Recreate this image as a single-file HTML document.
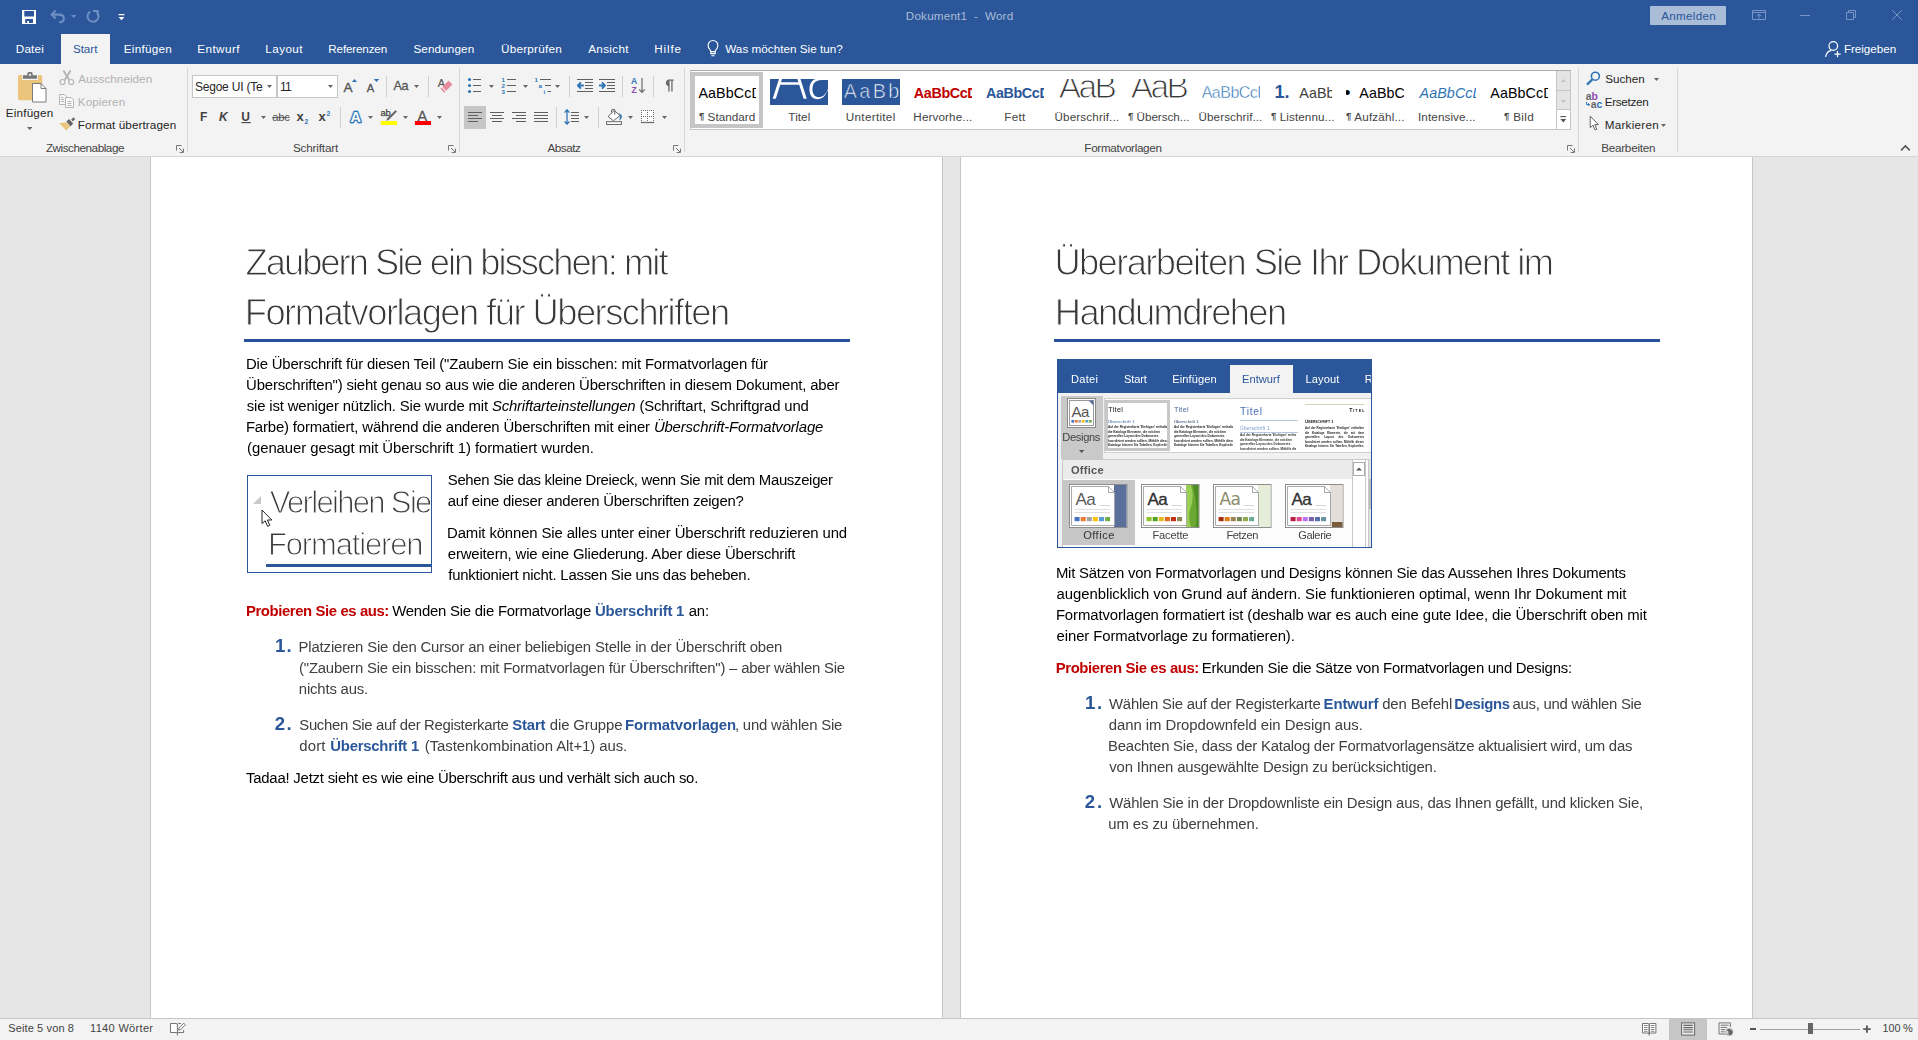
<!DOCTYPE html><html lang="de"><head><meta charset="utf-8"><title>Dokument1 - Word</title><style>

html,body{margin:0;padding:0;}
body{width:1918px;height:1040px;overflow:hidden;position:relative;background:#e6e6e6;font-family:"Liberation Sans", sans-serif;}
.t{position:absolute;white-space:pre;line-height:1;font-kerning:normal;}
.c{position:absolute;overflow:hidden;}
.doc{position:absolute;left:0;top:0;width:1918px;height:1040px;will-change:transform;}
b{font-weight:bold;}


</style></head><body>
<div style="position:absolute;left:0px;top:0px;width:1918px;height:64px;background:#2b579a;"></div>
<div style="position:absolute;left:0px;top:64px;width:1918px;height:92px;background:#f3f3f3;"></div>
<div style="position:absolute;left:0px;top:156px;width:1918px;height:1px;background:#d4d4d4;"></div>
<div style="position:absolute;left:61px;top:34px;width:49px;height:31px;background:#f3f3f3;"></div>
<div style="position:absolute;left:150px;top:157px;width:793px;height:862px;background:#fff;box-sizing:border-box;border-left:1px solid #c6c6c6;border-right:1px solid #c6c6c6;"></div>
<div style="position:absolute;left:960px;top:157px;width:793px;height:862px;background:#fff;box-sizing:border-box;border-left:1px solid #c6c6c6;border-right:1px solid #c6c6c6;"></div>
<div style="position:absolute;left:0px;top:1018px;width:1918px;height:1px;background:#c6c6c6;"></div>
<div style="position:absolute;left:0px;top:1019px;width:1918px;height:21px;background:#f3f3f3;"></div>
<div style="position:absolute;left:1650px;top:6px;width:76px;height:19px;background:#a9bcd8;border-radius:1px;"></div>
<div style="position:absolute;left:187px;top:68px;width:1px;height:84px;background:#d8d8d8;"></div>
<div style="position:absolute;left:459px;top:68px;width:1px;height:84px;background:#d8d8d8;"></div>
<div style="position:absolute;left:684px;top:68px;width:1px;height:84px;background:#d8d8d8;"></div>
<div style="position:absolute;left:1578px;top:68px;width:1px;height:84px;background:#d8d8d8;"></div>
<div style="position:absolute;left:1677px;top:68px;width:1px;height:84px;background:#d8d8d8;"></div>
<div style="position:absolute;left:386px;top:76px;width:1px;height:21px;background:#d0d0d0;"></div>
<div style="position:absolute;left:428px;top:76px;width:1px;height:21px;background:#d0d0d0;"></div>
<div style="position:absolute;left:340px;top:107px;width:1px;height:21px;background:#d0d0d0;"></div>
<div style="position:absolute;left:569px;top:76px;width:1px;height:21px;background:#d0d0d0;"></div>
<div style="position:absolute;left:622px;top:76px;width:1px;height:21px;background:#d0d0d0;"></div>
<div style="position:absolute;left:653px;top:76px;width:1px;height:21px;background:#d0d0d0;"></div>
<div style="position:absolute;left:556px;top:107px;width:1px;height:21px;background:#d0d0d0;"></div>
<div style="position:absolute;left:598px;top:107px;width:1px;height:21px;background:#d0d0d0;"></div>
<div style="position:absolute;left:192px;top:75px;width:85px;height:23px;background:#fff;box-sizing:border-box;border:1px solid #c6c6c6;"></div>
<div style="position:absolute;left:277px;top:75px;width:61px;height:23px;background:#fff;box-sizing:border-box;border:1px solid #c6c6c6;border-left:1px solid #c6c6c6;"></div>
<div style="position:absolute;left:244px;top:339px;width:606px;height:3px;background:#26539a;"></div>
<div style="position:absolute;left:1054px;top:339px;width:606px;height:3px;background:#26539a;"></div>
<svg style="position:absolute;left:22px;top:10px;" width="14" height="14" viewBox="0 0 14 14"><path fill="#fff" fill-rule="evenodd" d="M0 0H14V14H0Z M2.3 1H12V6.4H2.3Z M3.2 9H11V13H7V11H5.2V13H3.2Z"/></svg>
<svg style="position:absolute;left:50px;top:9px;" width="16" height="15" viewBox="0 0 16 15"><path d="M5.6 1.6L1.7 5.6L5.6 9.6M2 5.6H9.2C12.4 5.6 13.8 7.6 13.8 9.4C13.8 11.6 12 13.1 9.2 13.3" fill="none" stroke="#6f8ec4" stroke-width="2.1"/></svg>
<svg style="position:absolute;left:70.7px;top:15px;" width="5.4" height="3" viewBox="0 0 5.4 3"><path d="M0 0H5.4L2.7 3Z" fill="#6f8ec4"/></svg>
<svg style="position:absolute;left:85px;top:9px;" width="16" height="15" viewBox="0 0 16 15"><path d="M5.2 2.6A5.5 5.5 0 1 0 11.9 3.4" fill="none" stroke="#6f8ec4" stroke-width="2"/><path d="M8 1.9H12.7V6.6" fill="none" stroke="#6f8ec4" stroke-width="2"/></svg>
<svg style="position:absolute;left:118px;top:13px;" width="7" height="8" viewBox="0 0 7 8"><path d="M0.6 1H6.4V2.2H0.6Z M0.6 4H6.4L3.5 7.3Z" fill="#fff"/></svg>
<svg style="position:absolute;left:706.4px;top:39px;" width="14" height="18" viewBox="0 0 14 18"><path d="M4.8 12.6C4.8 10.6 2.1 9.6 2.1 6.4A4.9 4.9 0 0 1 11.9 6.4C11.9 9.6 9.2 10.6 9.2 12.6Z M4.8 12.6V14.6H9.2V12.6 M5.4 16.7H8.6" fill="none" stroke="#fff" stroke-width="1.15"/></svg>
<svg style="position:absolute;left:1824px;top:40px;" width="18" height="18" viewBox="0 0 18 18"><circle cx="9.3" cy="6" r="4.3" fill="none" stroke="#fff" stroke-width="1.2"/><path d="M1.6 17C2.2 13.2 4.6 11 7.4 10.4" fill="none" stroke="#fff" stroke-width="1.2"/><path d="M10.4 14.2H16.6M13.5 11.1V17.3" stroke="#fff" stroke-width="1.2"/></svg>
<svg style="position:absolute;left:1752px;top:10px;" width="14" height="10" viewBox="0 0 14 10"><path d="M0.5 0.5H13.5V9.5H0.5Z M0.5 2.5H13.5" fill="none" stroke="#7895c9"/><path d="M7 4.2V8.6 M4.8 6.2L7 4L9.2 6.2" fill="none" stroke="#7895c9"/></svg>
<div style="position:absolute;left:1800px;top:15px;width:10px;height:1px;background:#7895c9;"></div>
<svg style="position:absolute;left:1846px;top:10px;" width="10" height="10" viewBox="0 0 10 10"><path d="M0.5 2.5H7.5V9.5H0.5Z M2.5 2.5V0.5H9.5V7.5H7.5" fill="none" stroke="#7895c9"/></svg>
<svg style="position:absolute;left:1892px;top:10px;" width="10" height="10" viewBox="0 0 10 10"><path d="M0.3 0.3L9.7 9.7M9.7 0.3L0.3 9.7" fill="none" stroke="#7895c9" stroke-width="1"/></svg>
<svg style="position:absolute;left:18px;top:72px;" width="29" height="31" viewBox="0 0 29 31"><rect x="0" y="3" width="24.2" height="25.2" rx="1.6" fill="#ecc57c"/><rect x="4.2" y="2.6" width="15.8" height="5.4" fill="#f3f3f3"/><path d="M5 3.2H19V6.8H5Z M9.3 3.4V1.6Q9.3 0 10.9 0H13.1Q14.7 0 14.7 1.6V3.4Z" fill="#787878"/><circle cx="12" cy="2.9" r="1.1" fill="#f3f3f3"/><path d="M14.5 11.5H23L28 16.5V30H14.5Z" fill="#fff" stroke="#7a7a7a" stroke-width="1"/><path d="M23 11.5V16.5H28" fill="none" stroke="#7a7a7a" stroke-width="1"/></svg>
<svg style="position:absolute;left:27px;top:127px;" width="5.4" height="3" viewBox="0 0 5.4 3"><path d="M0 0H5.4L2.7 3Z" fill="#666"/></svg>
<svg style="position:absolute;left:59px;top:70px;" width="16" height="16" viewBox="0 0 16 16"><path d="M4.4 0.6L10.2 9.8 M11.6 0.6L5.8 9.8" stroke="#b4b4b4" stroke-width="1.9" fill="none"/><circle cx="3.5" cy="12" r="2.5" fill="none" stroke="#b4b4b4" stroke-width="1.2"/><circle cx="12.2" cy="12" r="2.5" fill="none" stroke="#b4b4b4" stroke-width="1.2"/></svg>
<svg style="position:absolute;left:59px;top:94px;" width="16" height="14" viewBox="0 0 16 14"><path d="M0.5 0.5H5.5L7.5 2.5V10.5H0.5Z" fill="#f8f8f8" stroke="#b4b4b4"/><path d="M2 3.5H4.5M2 5.5H5M2 7.5H5" stroke="#b4b4b4"/><path d="M6.5 3.5H12L14.5 6V13.5H6.5Z" fill="#fafafa" stroke="#b4b4b4"/><path d="M8.5 7.5H12.5M8.5 9.5H12.5M8.5 11.5H12.5" stroke="#b4b4b4"/></svg>
<svg style="position:absolute;left:59px;top:116px;" width="17" height="16" viewBox="0 0 17 16"><path d="M0.2 7.2L7.2 6.2L11 10.8L7.2 14.6Z" fill="#ecc57c"/><path d="M7.4 5.6L10 3L14.2 7.6L11.4 10.4Z" fill="#666"/><path d="M12.2 3.6L14.6 1.2L16.2 3L13.8 5.4Z" fill="#666"/></svg>
<svg style="position:absolute;left:175.5px;top:145px;" width="8" height="8" viewBox="0 0 8 8"><path d="M0.5 5.5V0.5H5.5" fill="none" stroke="#777"/><path d="M3 3L7 7M7.5 3.6V7.5H3.6" fill="none" stroke="#777"/></svg>
<svg style="position:absolute;left:447.5px;top:145px;" width="8" height="8" viewBox="0 0 8 8"><path d="M0.5 5.5V0.5H5.5" fill="none" stroke="#777"/><path d="M3 3L7 7M7.5 3.6V7.5H3.6" fill="none" stroke="#777"/></svg>
<svg style="position:absolute;left:672.5px;top:145px;" width="8" height="8" viewBox="0 0 8 8"><path d="M0.5 5.5V0.5H5.5" fill="none" stroke="#777"/><path d="M3 3L7 7M7.5 3.6V7.5H3.6" fill="none" stroke="#777"/></svg>
<svg style="position:absolute;left:1566.5px;top:145px;" width="8" height="8" viewBox="0 0 8 8"><path d="M0.5 5.5V0.5H5.5" fill="none" stroke="#777"/><path d="M3 3L7 7M7.5 3.6V7.5H3.6" fill="none" stroke="#777"/></svg>
<svg style="position:absolute;left:267px;top:85px;" width="5" height="3" viewBox="0 0 5 3"><path d="M0 0H5L2.5 3Z" fill="#666"/></svg>
<svg style="position:absolute;left:328px;top:85px;" width="5" height="3" viewBox="0 0 5 3"><path d="M0 0H5L2.5 3Z" fill="#666"/></svg>
<svg style="position:absolute;left:343px;top:78px;" width="16" height="15" viewBox="0 0 16 15"><text x="0.6" y="14" style="font-family:Liberation Sans,sans-serif;font-size:13.6px" fill="#555" stroke="#555" stroke-width="0.35">A</text><path d="M8.9 4L11.5 1L14.1 4Z" fill="#2e75b6"/></svg>
<svg style="position:absolute;left:366px;top:78px;" width="15" height="15" viewBox="0 0 15 15"><text x="0.8" y="14" style="font-family:Liberation Sans,sans-serif;font-size:11.2px" fill="#555" stroke="#555" stroke-width="0.35">A</text><path d="M7.7 1L13.3 1L10.5 4Z" fill="#2e75b6"/></svg>
<svg style="position:absolute;left:393px;top:79px;" width="18" height="13" viewBox="0 0 18 13"><text x="0.6" y="11.2" style="font-family:Liberation Sans,sans-serif;font-size:12.6px;letter-spacing:-0.4px" fill="#555" stroke="#555" stroke-width="0.3">Aa</text></svg>
<svg style="position:absolute;left:413.8px;top:85px;" width="5" height="3" viewBox="0 0 5 3"><path d="M0 0H5L2.5 3Z" fill="#666"/></svg>
<svg style="position:absolute;left:437px;top:78px;" width="17" height="16" viewBox="0 0 17 16"><text x="0.8" y="9" style="font-family:Liberation Sans,sans-serif;font-size:10.8px" fill="#555" stroke="#555" stroke-width="0.2">A</text><path d="M11.6 2.6L15.4 6.6L9.2 12.8L5.4 8.8Z" fill="#e88b9c"/><path d="M4.7 9.5L8.5 13.5L7.3 14.7L3.5 10.7Z" fill="#e88b9c"/></svg>
<svg style="position:absolute;left:199px;top:110px;" width="10" height="13" viewBox="0 0 10 13"><text x="1" y="11.2" style="font-family:Liberation Sans,sans-serif;font-weight:bold;font-size:12px" fill="#444">F</text></svg>
<svg style="position:absolute;left:218px;top:110px;" width="12" height="13" viewBox="0 0 12 13"><text x="1" y="11.2" style="font-family:Liberation Sans,sans-serif;font-weight:bold;font-size:12px;font-style:italic" fill="#444">K</text></svg>
<svg style="position:absolute;left:240px;top:110px;" width="12" height="14" viewBox="0 0 12 14"><text x="1.2" y="11.2" style="font-family:Liberation Sans,sans-serif;font-weight:bold;font-size:12px" fill="#444">U</text><path d="M1.4 12.6H10.8" stroke="#444" stroke-width="1.1"/></svg>
<svg style="position:absolute;left:261px;top:116px;" width="5" height="3" viewBox="0 0 5 3"><path d="M0 0H5L2.5 3Z" fill="#666"/></svg>
<svg style="position:absolute;left:272px;top:110px;" width="18" height="13" viewBox="0 0 18 13"><text x="0.3" y="11" style="font-family:Liberation Sans,sans-serif;font-size:11.4px;letter-spacing:-0.3px" fill="#555">abc</text><path d="M0 7.6H17.6" stroke="#555" stroke-width="0.9"/></svg>
<svg style="position:absolute;left:296px;top:110px;" width="14" height="15" viewBox="0 0 14 15"><text x="0.6" y="11.2" style="font-family:Liberation Sans,sans-serif;font-weight:bold;font-size:13px" fill="#444">x</text><text x="8.4" y="13.6" style="font-family:Liberation Sans,sans-serif;font-weight:bold;font-size:6.6px" fill="#2e75b6">2</text></svg>
<svg style="position:absolute;left:318px;top:108px;" width="14" height="15" viewBox="0 0 14 15"><text x="0.6" y="13.2" style="font-family:Liberation Sans,sans-serif;font-weight:bold;font-size:13px" fill="#444">x</text><text x="8.6" y="7.6" style="font-family:Liberation Sans,sans-serif;font-weight:bold;font-size:6.6px" fill="#2e75b6">2</text></svg>
<svg style="position:absolute;left:347px;top:108px;" width="18" height="17" viewBox="0 0 18 17"><text x="3.6" y="13.6" style="font-family:Liberation Sans,sans-serif;font-weight:bold;font-size:14.4px" fill="#2e75b6" stroke="#9cc3e8" stroke-width="3.6" stroke-linejoin="round" opacity="0.6">A</text><text x="3.6" y="13.6" style="font-family:Liberation Sans,sans-serif;font-weight:bold;font-size:14.4px" fill="#2e75b6" stroke="#2e75b6" stroke-width="2.3" stroke-linejoin="round">A</text><text x="3.6" y="13.6" style="font-family:Liberation Sans,sans-serif;font-weight:bold;font-size:14.4px" fill="#fff">A</text></svg>
<svg style="position:absolute;left:367.8px;top:116px;" width="5" height="3" viewBox="0 0 5 3"><path d="M0 0H5L2.5 3Z" fill="#666"/></svg>
<svg style="position:absolute;left:380px;top:108px;" width="18" height="17" viewBox="0 0 18 17"><text x="0.6" y="7.6" style="font-family:Liberation Sans,sans-serif;font-size:9.4px;letter-spacing:-0.3px" fill="#444" stroke="#444" stroke-width="0.25">ab</text><path d="M15.4 2.2L17 3.6L8.6 12L6.4 12.8L7 10.6Z" fill="#666"/><rect x="0.8" y="13" width="16.2" height="4" fill="#ffff00"/></svg>
<svg style="position:absolute;left:402.8px;top:116px;" width="5" height="3" viewBox="0 0 5 3"><path d="M0 0H5L2.5 3Z" fill="#666"/></svg>
<svg style="position:absolute;left:414px;top:109px;" width="18" height="16" viewBox="0 0 18 16"><text x="3.6" y="12" style="font-family:Liberation Sans,sans-serif;font-size:14.4px" fill="#555" stroke="#555" stroke-width="0.3">A</text><rect x="0.9" y="12" width="16.1" height="4" fill="#ff0000"/></svg>
<svg style="position:absolute;left:436.6px;top:116px;" width="5" height="3" viewBox="0 0 5 3"><path d="M0 0H5L2.5 3Z" fill="#666"/></svg>
<svg style="position:absolute;left:467px;top:77px;" width="15" height="17" viewBox="0 0 15 17"><circle cx="2.5" cy="2.5" r="1.55" fill="#2e75b6"/><rect x="6" y="2.0" width="8" height="1" fill="#5f5f5f"/><circle cx="2.5" cy="8.5" r="1.55" fill="#2e75b6"/><rect x="6" y="8.0" width="8" height="1" fill="#5f5f5f"/><circle cx="2.5" cy="14.5" r="1.55" fill="#2e75b6"/><rect x="6" y="14.0" width="8" height="1" fill="#5f5f5f"/></svg>
<svg style="position:absolute;left:489px;top:85px;" width="5" height="3" viewBox="0 0 5 3"><path d="M0 0H5L2.5 3Z" fill="#666"/></svg>
<svg style="position:absolute;left:501px;top:77px;" width="16" height="18" viewBox="0 0 16 18"><text x="0.4" y="4.8" style="font-family:Liberation Sans,sans-serif;font-weight:bold;font-size:6.2px" fill="#2e75b6">1</text><rect x="6" y="2.0" width="9" height="1" fill="#5f5f5f"/><text x="0.4" y="10.8" style="font-family:Liberation Sans,sans-serif;font-weight:bold;font-size:6.2px" fill="#2e75b6">2</text><rect x="6" y="8.0" width="9" height="1" fill="#5f5f5f"/><text x="0.4" y="16.8" style="font-family:Liberation Sans,sans-serif;font-weight:bold;font-size:6.2px" fill="#2e75b6">3</text><rect x="6" y="14.0" width="9" height="1" fill="#5f5f5f"/></svg>
<svg style="position:absolute;left:522.8px;top:85px;" width="5" height="3" viewBox="0 0 5 3"><path d="M0 0H5L2.5 3Z" fill="#666"/></svg>
<svg style="position:absolute;left:534px;top:77px;" width="18" height="18" viewBox="0 0 18 18"><text x="0.4" y="4.8" style="font-family:Liberation Sans,sans-serif;font-weight:bold;font-size:6.2px" fill="#2e75b6">1</text><rect x="6" y="2" width="11" height="1" fill="#5f5f5f"/><text x="4.6" y="10.6" style="font-family:Liberation Sans,sans-serif;font-weight:bold;font-size:6.2px" fill="#2e75b6">a</text><rect x="11" y="8" width="6" height="1" fill="#5f5f5f"/><text x="9.6" y="16.8" style="font-family:Liberation Sans,sans-serif;font-weight:bold;font-size:6.2px" fill="#2e75b6">i</text><rect x="13.6" y="14" width="3.4" height="1" fill="#5f5f5f"/></svg>
<svg style="position:absolute;left:555px;top:85px;" width="5" height="3" viewBox="0 0 5 3"><path d="M0 0H5L2.5 3Z" fill="#666"/></svg>
<svg style="position:absolute;left:577px;top:79px;" width="16" height="13" viewBox="0 0 16 13"><rect x="0" y="0" width="16" height="1" fill="#5f5f5f"/><rect x="8" y="3" width="8" height="1" fill="#5f5f5f"/><rect x="8" y="6" width="8" height="1" fill="#5f5f5f"/><rect x="8" y="9" width="8" height="1" fill="#5f5f5f"/><rect x="0" y="12" width="16" height="1" fill="#5f5f5f"/><path d="M6.8 6.5H1.6M3.9 3.4L0.9 6.5L3.9 9.6" fill="none" stroke="#2e75b6" stroke-width="1.9"/></svg>
<svg style="position:absolute;left:599px;top:79px;" width="16" height="13" viewBox="0 0 16 13"><rect x="0" y="0" width="16" height="1" fill="#5f5f5f"/><rect x="8" y="3" width="8" height="1" fill="#5f5f5f"/><rect x="8" y="6" width="8" height="1" fill="#5f5f5f"/><rect x="8" y="9" width="8" height="1" fill="#5f5f5f"/><rect x="0" y="12" width="16" height="1" fill="#5f5f5f"/><path d="M0 6.5H5.2M2.9 3.4L5.9 6.5L2.9 9.6" fill="none" stroke="#2e75b6" stroke-width="1.9"/></svg>
<svg style="position:absolute;left:631px;top:77px;" width="15" height="17" viewBox="0 0 15 17"><text x="0" y="7.4" style="font-family:Liberation Sans,sans-serif;font-weight:bold;font-size:8.6px" fill="#2e75b6">A</text><text x="0.4" y="16" style="font-family:Liberation Sans,sans-serif;font-weight:bold;font-size:8.6px" fill="#8e4bb0">Z</text><path d="M11 1V15.4M8.2 12.4L11 15.4L13.8 12.4" fill="none" stroke="#6a6a6a" stroke-width="1.2"/></svg>
<svg style="position:absolute;left:663px;top:79px;" width="12" height="14" viewBox="0 0 12 14"><path d="M5.2 7.2A3.2 3.4 0 0 1 5.2 0.6H10.6V1.8H9.6V12.6H8.3V1.8H6.6V12.6H5.3Z" fill="#6a6a6a"/></svg>
<div style="position:absolute;left:464px;top:106px;width:22px;height:23px;background:#c6c6c6;"></div>
<svg style="position:absolute;left:468px;top:112px;" width="14" height="10" viewBox="0 0 14 10"><rect x="0" y="0" width="14" height="1" fill="#5f5f5f"/><rect x="0" y="3" width="10" height="1" fill="#5f5f5f"/><rect x="0" y="6" width="14" height="1" fill="#5f5f5f"/><rect x="0" y="9" width="10" height="1" fill="#5f5f5f"/></svg>
<svg style="position:absolute;left:490px;top:112px;" width="14" height="10" viewBox="0 0 14 10"><rect x="0" y="0" width="14" height="1" fill="#5f5f5f"/><rect x="2" y="3" width="10" height="1" fill="#5f5f5f"/><rect x="0" y="6" width="14" height="1" fill="#5f5f5f"/><rect x="2" y="9" width="10" height="1" fill="#5f5f5f"/></svg>
<svg style="position:absolute;left:512px;top:112px;" width="14" height="10" viewBox="0 0 14 10"><rect x="0" y="0" width="14" height="1" fill="#5f5f5f"/><rect x="4" y="3" width="10" height="1" fill="#5f5f5f"/><rect x="0" y="6" width="14" height="1" fill="#5f5f5f"/><rect x="4" y="9" width="10" height="1" fill="#5f5f5f"/></svg>
<svg style="position:absolute;left:534px;top:112px;" width="14" height="10" viewBox="0 0 14 10"><rect x="0" y="0" width="14" height="1" fill="#5f5f5f"/><rect x="0" y="3" width="14" height="1" fill="#5f5f5f"/><rect x="0" y="6" width="14" height="1" fill="#5f5f5f"/><rect x="0" y="9" width="14" height="1" fill="#5f5f5f"/></svg>
<svg style="position:absolute;left:564px;top:109px;" width="16" height="16" viewBox="0 0 16 16"><path d="M3 1V15M0.6 3.6L3 0.8L5.4 3.6M0.6 12.4L3 15.2L5.4 12.4" fill="none" stroke="#2e75b6" stroke-width="1.3"/><rect x="7" y="3" width="8" height="1" fill="#5f5f5f"/><rect x="7" y="6" width="8" height="1" fill="#5f5f5f"/><rect x="7" y="9" width="8" height="1" fill="#5f5f5f"/><rect x="7" y="12" width="8" height="1" fill="#5f5f5f"/></svg>
<svg style="position:absolute;left:584px;top:116px;" width="5" height="3" viewBox="0 0 5 3"><path d="M0 0H5L2.5 3Z" fill="#666"/></svg>
<svg style="position:absolute;left:605px;top:108px;" width="18" height="17" viewBox="0 0 18 17"><path d="M9.3 2.4L15 7.6L8.4 12.8L3 8.5Z" fill="#fff" stroke="#6a6a6a" stroke-width="1"/><path d="M6.6 4.6V2.6Q6.6 1.3 8.2 1.3Q9.8 1.3 9.8 2.6V6.4" fill="none" stroke="#6a6a6a" stroke-width="1.1"/><path d="M13.6 5.2Q17.4 6.2 16.8 9.2Q16.2 11.4 14.2 12.6Q15 9.4 15 7.6Z" fill="#2e75b6"/><rect x="1.6" y="13.7" width="14.8" height="2.8" fill="#fff" stroke="#6a6a6a" stroke-width="1"/></svg>
<svg style="position:absolute;left:627.8px;top:116px;" width="5" height="3" viewBox="0 0 5 3"><path d="M0 0H5L2.5 3Z" fill="#666"/></svg>
<svg style="position:absolute;left:640px;top:109px;" width="15" height="15" viewBox="0 0 15 15"><rect x="0.8" y="0.8" width="13.4" height="11.6" fill="#fff"/><rect x="1" y="1" width="1" height="1" fill="#6a6a6a"/><rect x="3" y="1" width="1" height="1" fill="#6a6a6a"/><rect x="5" y="1" width="1" height="1" fill="#6a6a6a"/><rect x="7" y="1" width="1" height="1" fill="#6a6a6a"/><rect x="9" y="1" width="1" height="1" fill="#6a6a6a"/><rect x="11" y="1" width="1" height="1" fill="#6a6a6a"/><rect x="13" y="1" width="1" height="1" fill="#6a6a6a"/><rect x="1" y="3" width="1" height="1" fill="#6a6a6a"/><rect x="7" y="3" width="1" height="1" fill="#6a6a6a"/><rect x="13" y="3" width="1" height="1" fill="#6a6a6a"/><rect x="1" y="5" width="1" height="1" fill="#6a6a6a"/><rect x="7" y="5" width="1" height="1" fill="#6a6a6a"/><rect x="13" y="5" width="1" height="1" fill="#6a6a6a"/><rect x="1" y="7" width="1" height="1" fill="#6a6a6a"/><rect x="3" y="7" width="1" height="1" fill="#6a6a6a"/><rect x="5" y="7" width="1" height="1" fill="#6a6a6a"/><rect x="7" y="7" width="1" height="1" fill="#6a6a6a"/><rect x="9" y="7" width="1" height="1" fill="#6a6a6a"/><rect x="11" y="7" width="1" height="1" fill="#6a6a6a"/><rect x="13" y="7" width="1" height="1" fill="#6a6a6a"/><rect x="1" y="9" width="1" height="1" fill="#6a6a6a"/><rect x="7" y="9" width="1" height="1" fill="#6a6a6a"/><rect x="13" y="9" width="1" height="1" fill="#6a6a6a"/><rect x="1" y="11" width="1" height="1" fill="#6a6a6a"/><rect x="7" y="11" width="1" height="1" fill="#6a6a6a"/><rect x="13" y="11" width="1" height="1" fill="#6a6a6a"/><rect x="0.8" y="12.9" width="13.4" height="1.2" fill="#6a6a6a"/></svg>
<svg style="position:absolute;left:661.8px;top:116px;" width="5" height="3" viewBox="0 0 5 3"><path d="M0 0H5L2.5 3Z" fill="#666"/></svg>
<svg style="position:absolute;left:1586px;top:71px;" width="15" height="15" viewBox="0 0 15 15"><circle cx="9.4" cy="5.2" r="4" fill="none" stroke="#2e75b6" stroke-width="1.6"/><path d="M6.4 8.4L1 13.6" stroke="#2e75b6" stroke-width="2.2"/></svg>
<svg style="position:absolute;left:1654px;top:77.6px;" width="5" height="3" viewBox="0 0 5 3"><path d="M0 0H5L2.5 3Z" fill="#666"/></svg>
<svg style="position:absolute;left:1585px;top:92px;" width="19" height="17" viewBox="0 0 19 17"><text x="0.8" y="8" style="font-family:Liberation Sans,sans-serif;font-size:10.4px;font-weight:bold" fill="#666">a</text><text x="6.4" y="8" style="font-family:Liberation Sans,sans-serif;font-size:10.4px;font-weight:bold" fill="#8e4bb0">b</text><text x="5.8" y="15.8" style="font-family:Liberation Sans,sans-serif;font-size:10.4px;font-weight:bold" fill="#666">a</text><text x="11.4" y="15.8" style="font-family:Liberation Sans,sans-serif;font-size:10.4px;font-weight:bold" fill="#2e75b6">c</text><path d="M1.6 10V12.6H4.6M3.2 11.2L4.6 12.6L3.2 14" fill="none" stroke="#2e75b6" stroke-width="1"/></svg>
<svg style="position:absolute;left:1589px;top:115px;" width="11" height="17" viewBox="0 0 11 17"><path d="M1.2 1.2V12.6L4 10.2L6 15L7.8 14.2L5.8 9.6H9.4Z" fill="#fff" stroke="#555" stroke-width="0.9"/></svg>
<svg style="position:absolute;left:1661px;top:123.6px;" width="5" height="3" viewBox="0 0 5 3"><path d="M0 0H5L2.5 3Z" fill="#666"/></svg>
<svg style="position:absolute;left:1900px;top:144px;" width="11" height="8" viewBox="0 0 11 8"><path d="M1 6.4L5.4 2L9.8 6.4" fill="none" stroke="#555" stroke-width="1.6"/></svg>
<div style="position:absolute;left:690px;top:70px;width:881px;height:60px;background:#fff;box-sizing:border-box;border:1px solid #c6c6c6;border-top-color:#ababab;"></div>
<div style="position:absolute;left:691px;top:72px;width:72px;height:56px;background:#fff;box-sizing:border-box;border:4px solid #c6c6c6;"></div>
<div style="position:absolute;left:1556px;top:71px;width:14px;height:20px;background:#e4e4e4;box-sizing:border-box;border-left:1px solid #c6c6c6;border-bottom:1px solid #c6c6c6;"></div>
<div style="position:absolute;left:1556px;top:91px;width:14px;height:19px;background:#e4e4e4;box-sizing:border-box;border-left:1px solid #c6c6c6;border-bottom:1px solid #c6c6c6;"></div>
<div style="position:absolute;left:1556px;top:110px;width:14px;height:19px;background:#fff;box-sizing:border-box;border-left:1px solid #c6c6c6;"></div>
<svg style="position:absolute;left:1560.5px;top:78.5px;" width="5" height="3" viewBox="0 0 5 3"><path d="M0 3H5L2.5 0Z" fill="#c3c3c3"/></svg>
<svg style="position:absolute;left:1560.5px;top:99.5px;" width="5" height="3" viewBox="0 0 5 3"><path d="M0 0H5L2.5 3Z" fill="#c3c3c3"/></svg>
<svg style="position:absolute;left:1560px;top:116px;" width="7" height="8" viewBox="0 0 7 8"><path d="M0.4 0.6H6.2" stroke="#555" stroke-width="1.1"/><path d="M0.4 3H6.2L3.3 6.4Z" fill="#555"/></svg>
<div style="position:absolute;left:770px;top:79px;width:58px;height:26px;background:#2b579a;"></div>
<div style="position:absolute;left:842px;top:79px;width:58px;height:26px;background:#2b579a;"></div>
<svg style="position:absolute;left:170px;top:1021.6px;" width="16" height="14" viewBox="0 0 16 14"><path d="M0.5 1.5H6.2Q7.4 1.5 7.4 2.8V11.6Q7.4 10.5 6.2 10.5H0.5Z" fill="#fff" stroke="#666" stroke-width="0.9"/><path d="M7.4 2.8Q7.4 1.5 8.6 1.5H11 M7.4 11.6Q7.4 10.5 8.6 10.5H13.6V8" fill="none" stroke="#666" stroke-width="0.9"/><path d="M7.4 11.6V13.4" stroke="#666" stroke-width="0.9"/><path d="M13.8 1.2L15.4 2.8L10.6 7.6L8.6 8L9 6Z" fill="#fff" stroke="#666" stroke-width="0.9"/></svg>
<svg style="position:absolute;left:1642px;top:1021.7px;" width="15" height="14" viewBox="0 0 15 14"><path d="M0.5 1.5H6Q7.2 1.5 7.2 2.6V12Q7.2 11 6 11H0.5Z M13.9 1.5H8.4Q7.2 1.5 7.2 2.6V12Q7.2 11 8.4 11H13.9Z" fill="#fff" stroke="#666" stroke-width="0.9"/><path d="M2 3.5H5.6M2 5.5H5.6M2 7.5H5.6M2 9.3H5.6M8.8 3.5H12.4M8.8 5.5H12.4M8.8 7.5H12.4M8.8 9.3H12.4" stroke="#666" stroke-width="0.8"/><path d="M7.2 12V13.6" stroke="#666" stroke-width="0.9"/></svg>
<div style="position:absolute;left:1669px;top:1019px;width:38px;height:21px;background:#c6c6c6;"></div>
<svg style="position:absolute;left:1681px;top:1021.6px;" width="15" height="14" viewBox="0 0 15 14"><rect x="0.6" y="0.9" width="13" height="12.2" fill="#e9e9e9" stroke="#666" stroke-width="1"/><path d="M2.4 3.4H11.8M2.4 5.6H11.8M2.4 7.8H11.8M2.4 10H11.8" stroke="#666" stroke-width="1.1"/></svg>
<svg style="position:absolute;left:1718px;top:1021.6px;" width="16" height="15" viewBox="0 0 16 15"><path d="M12.4 5V0.9H1V12H8" fill="none" stroke="#666" stroke-width="0.9"/><path d="M2.8 3.2H10.6M2.8 5.4H9M2.8 7.6H7.4M2.8 9.8H7" stroke="#666" stroke-width="0.9"/><circle cx="11.4" cy="10" r="3.9" fill="#666" stroke="#f3f3f3" stroke-width="0.8"/><path d="M8.6 8.2Q10.6 8.6 10.4 10.4Q10.2 11.6 11.4 12.8Q9 12.8 8.2 10.4Z M12.2 6.8Q12.4 8.2 14.4 8.8Q13.8 7.2 12.2 6.8Z" fill="#d8d8d8"/></svg>
<div style="position:absolute;left:1750px;top:1028px;width:6px;height:2px;background:#555;"></div>
<div style="position:absolute;left:1760px;top:1029px;width:100px;height:1px;background:#a0a0a0;"></div>
<div style="position:absolute;left:1808px;top:1023px;width:5px;height:11px;background:#666;"></div>
<svg style="position:absolute;left:1863px;top:1025px;" width="8" height="8" viewBox="0 0 8 8"><path d="M0.2 4.1H7.7M3.95 0.4V7.8" stroke="#5c5c5c" stroke-width="1.9"/></svg>
<div style="position:absolute;left:247px;top:475px;width:185px;height:98px;background:#fff;box-sizing:border-box;border:1px solid #2b579a;"></div>
<svg style="position:absolute;left:253px;top:496px;" width="8" height="8" viewBox="0 0 8 8"><path d="M8 0V8H0Z" fill="#c9c9c9"/></svg>
<div style="position:absolute;left:266px;top:564px;width:165px;height:3px;background:#2b579a;"></div>
<div style="position:absolute;left:1057px;top:359px;width:315px;height:189px;background:#f1f1f1;box-sizing:border-box;border:1px solid #2b579a;"></div>
<div style="position:absolute;left:1058px;top:360px;width:313px;height:33px;background:#2b579a;"></div>
<div style="position:absolute;left:1230px;top:365px;width:63px;height:28px;background:#f3f3f3;"></div>
<div style="position:absolute;left:1061px;top:395.8px;width:41.8px;height:62.8px;background:#c9c9c9;"></div>
<svg style="position:absolute;left:1067px;top:398px;" width="29" height="30" viewBox="0 0 29 30"><rect x="0.5" y="0.5" width="28" height="29" fill="#fff" stroke="#8a8a8a"/><rect x="2.5" y="2.5" width="24" height="25" fill="#fff" stroke="#9a9a9a"/><path d="M21.5 2.5H26.5V7.5Z" fill="#5a6f9a"/><text x="4.6" y="19" style="font-family:Liberation Sans,sans-serif;font-size:15px;letter-spacing:-0.6px" fill="#555">Aa</text><rect x="4.4" y="22" width="2.8" height="2.6" fill="#4472c4"/><rect x="7.9" y="22" width="2.8" height="2.6" fill="#ed7d31"/><rect x="11.4" y="22" width="2.8" height="2.6" fill="#a5a5a5"/><rect x="14.9" y="22" width="2.8" height="2.6" fill="#ffc000"/><rect x="18.4" y="22" width="2.8" height="2.6" fill="#5b9bd5"/><rect x="21.9" y="22" width="2.8" height="2.6" fill="#70ad47"/></svg>
<svg style="position:absolute;left:1078.7px;top:450px;" width="5.2" height="3" viewBox="0 0 5.2 3"><path d="M0 0H5.2L2.6 3Z" fill="#555"/></svg>
<div style="position:absolute;left:1104px;top:398px;width:267px;height:55px;background:#fff;box-sizing:border-box;border-top:1px solid #cfcfcf;border-bottom:1px solid #cfcfcf;border-left:1px solid #cfcfcf;"></div>
<div style="position:absolute;left:1104.5px;top:400px;width:65.5px;height:50.5px;background:#fff;box-sizing:border-box;border:3.4px solid #c8c8c8;border-top-width:3.8px;"></div>
<div style="position:absolute;left:1108px;top:424.8px;width:59px;height:22.5px;overflow:hidden;will-change:transform;font-size:3.1px;line-height:4.5px;font-weight:bold;color:#222;white-space:nowrap;">Auf der Registerkarte 'Einfügen' enthalten<br>die Kataloge Elemente, die mit dem<br>generellen Layout des Dokuments<br>koordiniert werden sollten. Mithilfe dieser<br>Kataloge können Sie Tabellen, Kopfzeilen,</div>
<div style="position:absolute;left:1174px;top:424.8px;width:59px;height:27.0px;overflow:hidden;will-change:transform;font-size:3.1px;line-height:4.5px;font-weight:bold;color:#222;white-space:nowrap;">Auf der Registerkarte 'Einfügen' enthalten<br>die Kataloge Elemente, die mit dem<br>generellen Layout des Dokuments<br>koordiniert werden sollten. Mithilfe dieser<br>Kataloge können Sie Tabellen, Kopfzeilen,</div>
<div style="position:absolute;left:1240px;top:419.5px;width:58px;height:0.7px;background:#b9c6df;"></div>
<div style="position:absolute;left:1240px;top:432px;width:58px;height:0.7px;background:#b9c6df;"></div>
<div style="position:absolute;left:1240px;top:433.2px;width:56px;height:18.0px;overflow:hidden;will-change:transform;font-size:3.1px;line-height:4.5px;font-weight:bold;color:#333;white-space:nowrap;">Auf der Registerkarte 'Einfügen' enthalten<br>die Kataloge Elemente, die mit dem<br>generellen Layout des Dokuments<br>koordiniert werden sollten. Mithilfe dieser<br>Kataloge können Sie Tabellen, Kopfzeilen,</div>
<div style="position:absolute;left:1305px;top:403.5px;width:59px;height:0.6px;background:#d8d2b8;"></div>
<div style="position:absolute;left:1305px;top:425.8px;width:59px;height:22.5px;overflow:hidden;will-change:transform;font-size:2.9px;line-height:4.5px;font-weight:bold;color:#222;white-space:nowrap;text-align:justify;text-align-last:justify;">Auf der Registerkarte 'Einfügen' enthalten<br>die Kataloge Elemente, die mit dem<br>generellen Layout des Dokuments<br>koordiniert werden sollten. Mithilfe dieser<br>Kataloge können Sie Tabellen, Kopfzeilen,</div>
<div style="position:absolute;left:1062px;top:459px;width:307px;height:88px;background:#fdfdfd;box-sizing:border-box;border:1px solid #c8c8c8;border-bottom:none;"></div>
<div style="position:absolute;left:1063px;top:460px;width:289px;height:19px;background:#ebebeb;"></div>
<div style="position:absolute;left:1352px;top:460px;width:14px;height:87px;background:#fff;box-sizing:border-box;border-left:1px solid #c8c8c8;border-right:1px solid #c8c8c8;"></div>
<div style="position:absolute;left:1353px;top:462px;width:12px;height:14px;background:#fff;box-sizing:border-box;border:1px solid #ababab;"></div>
<svg style="position:absolute;left:1356px;top:467px;" width="6" height="4" viewBox="0 0 6 4"><path d="M0 3.6H6L3 0.4Z" fill="#555"/></svg>
<div style="position:absolute;left:1369px;top:479px;width:2px;height:30px;background:#c4c4c4;"></div>
<div style="position:absolute;left:1369px;top:459px;width:2px;height:88px;background:#e2e2e2;"></div>
<div style="position:absolute;left:1369px;top:479px;width:2px;height:30px;background:#bdbdbd;"></div>
<div style="position:absolute;left:1063px;top:480px;width:72px;height:65px;background:#c6c6c6;"></div>
<svg style="position:absolute;left:1069px;top:484px;" width="59" height="44" viewBox="0 0 59 44"><rect x="0.5" y="0.5" width="57.5" height="43" fill="#fff" stroke="#8c8c8c"/><rect x="45" y="1" width="12.5" height="42" fill="#5a6f9a"/><path d="M2.5 2.5H39.5L45.5 8.5V41.5H2.5Z" fill="#fff" stroke="#a0a0a0" stroke-width="0.9"/><path d="M39.5 2.5V8.5H45.5" fill="none" stroke="#a0a0a0" stroke-width="0.9"/><text x="6.4" y="21" style="font-family:Liberation Sans,sans-serif;font-size:17px;font-weight:normal;letter-spacing:-0.5px" fill="#595959" stroke="#595959" stroke-width="0">Aa</text><path d="M30.5 21.5H41" stroke="#d0d0d0" stroke-width="0.9"/><path d="M5.5 25.5H41M5.5 28.5H41" stroke="#dcdcdc" stroke-width="0.9"/><rect x="5.6" y="33" width="5" height="4.2" fill="#4472c4"/><rect x="11.7" y="33" width="5" height="4.2" fill="#ed7d31"/><rect x="17.799999999999997" y="33" width="5" height="4.2" fill="#a5a5a5"/><rect x="23.9" y="33" width="5" height="4.2" fill="#ffc000"/><rect x="30.0" y="33" width="5" height="4.2" fill="#5b9bd5"/><rect x="36.1" y="33" width="5" height="4.2" fill="#70ad47"/></svg>
<svg style="position:absolute;left:1141px;top:484px;" width="59" height="44" viewBox="0 0 59 44"><rect x="0.5" y="0.5" width="57.5" height="43" fill="#fff" stroke="#8c8c8c"/><rect x="45" y="1" width="12.5" height="42" fill="#6aa832"/><path d="M45 1H50Q54 14 49 26Q47 34 50 43H45Z" fill="#9fd35a" opacity="0.9"/><path d="M52 1H57.5V43H55Q57 22 52 1Z" fill="#4d8a23"/><path d="M2.5 2.5H39.5L45.5 8.5V41.5H2.5Z" fill="#fff" stroke="#a0a0a0" stroke-width="0.9"/><path d="M39.5 2.5V8.5H45.5" fill="none" stroke="#a0a0a0" stroke-width="0.9"/><text x="6.4" y="21" style="font-family:Liberation Sans,sans-serif;font-size:17px;font-weight:normal;letter-spacing:-0.5px" fill="#2f2f2f" stroke="#2f2f2f" stroke-width="0.35">Aa</text><path d="M30.5 21.5H41" stroke="#d0d0d0" stroke-width="0.9"/><path d="M5.5 25.5H41M5.5 28.5H41" stroke="#dcdcdc" stroke-width="0.9"/><rect x="5.6" y="33" width="5" height="4.2" fill="#90c226"/><rect x="11.7" y="33" width="5" height="4.2" fill="#54a021"/><rect x="17.799999999999997" y="33" width="5" height="4.2" fill="#e6b91e"/><rect x="23.9" y="33" width="5" height="4.2" fill="#e76618"/><rect x="30.0" y="33" width="5" height="4.2" fill="#c42f1a"/><rect x="36.1" y="33" width="5" height="4.2" fill="#918655"/></svg>
<svg style="position:absolute;left:1213px;top:484px;" width="59" height="44" viewBox="0 0 59 44"><rect x="0.5" y="0.5" width="57.5" height="43" fill="#fff" stroke="#8c8c8c"/><rect x="45" y="1" width="12.5" height="42" fill="#e6eed9"/><path d="M2.5 2.5H39.5L45.5 8.5V41.5H2.5Z" fill="#fff" stroke="#a0a0a0" stroke-width="0.9"/><path d="M39.5 2.5V8.5H45.5" fill="none" stroke="#a0a0a0" stroke-width="0.9"/><text x="6.4" y="21" style="font-family:DejaVu Sans,sans-serif;font-size:17px;font-weight:normal;letter-spacing:-0.5px" fill="#8d8b6c" stroke="#8d8b6c" stroke-width="0">Aa</text><path d="M30.5 21.5H41" stroke="#d0d0d0" stroke-width="0.9"/><path d="M5.5 25.5H41M5.5 28.5H41" stroke="#dcdcdc" stroke-width="0.9"/><rect x="5.6" y="33" width="5" height="4.2" fill="#a53010"/><rect x="11.7" y="33" width="5" height="4.2" fill="#de7e18"/><rect x="17.799999999999997" y="33" width="5" height="4.2" fill="#9f8351"/><rect x="23.9" y="33" width="5" height="4.2" fill="#728653"/><rect x="30.0" y="33" width="5" height="4.2" fill="#92aa4c"/><rect x="36.1" y="33" width="5" height="4.2" fill="#6aac91"/></svg>
<svg style="position:absolute;left:1285px;top:484px;" width="59" height="44" viewBox="0 0 59 44"><rect x="0.5" y="0.5" width="57.5" height="43" fill="#fff" stroke="#8c8c8c"/><rect x="45" y="1" width="12.5" height="42" fill="#e3deda"/><rect x="47" y="38" width="10.5" height="5" fill="#7b5b3c"/><path d="M2.5 2.5H39.5L45.5 8.5V41.5H2.5Z" fill="#fff" stroke="#a0a0a0" stroke-width="0.9"/><path d="M39.5 2.5V8.5H45.5" fill="none" stroke="#a0a0a0" stroke-width="0.9"/><text x="6.4" y="21" style="font-family:Liberation Sans,sans-serif;font-size:17px;font-weight:normal;letter-spacing:-0.5px" fill="#333" stroke="#333" stroke-width="0.35">Aa</text><path d="M30.5 21.5H41" stroke="#d0d0d0" stroke-width="0.9"/><path d="M5.5 25.5H41M5.5 28.5H41" stroke="#dcdcdc" stroke-width="0.9"/><rect x="5.6" y="33" width="5" height="4.2" fill="#b71e42"/><rect x="11.7" y="33" width="5" height="4.2" fill="#de478e"/><rect x="17.799999999999997" y="33" width="5" height="4.2" fill="#bc72f0"/><rect x="23.9" y="33" width="5" height="4.2" fill="#795faf"/><rect x="30.0" y="33" width="5" height="4.2" fill="#586ea6"/><rect x="36.1" y="33" width="5" height="4.2" fill="#6892a0"/></svg>
<span class="t" style="left:905.84px;top:10.00px;font-size:11.7px;color:#a9bbd7;letter-spacing:0.173px;">Dokument1  -  Word</span>
<span class="t" style="left:1661.25px;top:10.00px;font-size:11.7px;color:#2b579a;letter-spacing:0.252px;">Anmelden</span>
<span class="t" style="left:15.84px;top:43.00px;font-size:11.7px;color:#fff;letter-spacing:0.160px;">Datei</span>
<span class="t" style="left:72.88px;top:43.00px;font-size:11.7px;color:#2b579a;letter-spacing:-0.028px;">Start</span>
<span class="t" style="left:123.84px;top:43.00px;font-size:11.7px;color:#fff;letter-spacing:0.240px;">Einfügen</span>
<span class="t" style="left:197.34px;top:43.00px;font-size:11.7px;color:#fff;letter-spacing:0.417px;">Entwurf</span>
<span class="t" style="left:265.34px;top:43.00px;font-size:11.7px;color:#fff;letter-spacing:0.406px;">Layout</span>
<span class="t" style="left:328.34px;top:43.00px;font-size:11.7px;color:#fff;letter-spacing:-0.180px;">Referenzen</span>
<span class="t" style="left:413.38px;top:43.00px;font-size:11.7px;color:#fff;letter-spacing:0.122px;">Sendungen</span>
<span class="t" style="left:501.02px;top:43.00px;font-size:11.7px;color:#fff;letter-spacing:0.239px;">Überprüfen</span>
<span class="t" style="left:588.25px;top:43.00px;font-size:11.7px;color:#fff;letter-spacing:0.314px;">Ansicht</span>
<span class="t" style="left:654.34px;top:43.00px;font-size:11.7px;color:#fff;letter-spacing:0.812px;">Hilfe</span>
<span class="t" style="left:725.25px;top:43.00px;font-size:11.7px;color:#fff;letter-spacing:0.020px;">Was möchten Sie tun?</span>
<span class="t" style="left:1843.94px;top:43.00px;font-size:11.7px;color:#fff;letter-spacing:-0.052px;">Freigeben</span>
<span class="t" style="left:45.88px;top:142.00px;font-size:11.7px;color:#444;letter-spacing:-0.452px;">Zwischenablage</span>
<span class="t" style="left:292.88px;top:142.00px;font-size:11.7px;color:#444;letter-spacing:-0.154px;">Schriftart</span>
<span class="t" style="left:547.55px;top:142.00px;font-size:11.7px;color:#444;letter-spacing:-0.487px;">Absatz</span>
<span class="t" style="left:1084.34px;top:142.00px;font-size:11.7px;color:#444;letter-spacing:-0.326px;">Formatvorlagen</span>
<span class="t" style="left:1601.14px;top:142.00px;font-size:11.7px;color:#444;letter-spacing:-0.236px;">Bearbeiten</span>
<span class="t" style="left:5.84px;top:107.00px;font-size:11.7px;color:#262626;letter-spacing:0.169px;">Einfügen</span>
<span class="t" style="left:78.25px;top:73.00px;font-size:11.7px;color:#b2b2b2;letter-spacing:0.043px;">Ausschneiden</span>
<span class="t" style="left:77.84px;top:96.00px;font-size:11.7px;color:#b2b2b2;letter-spacing:0.075px;">Kopieren</span>
<span class="t" style="left:77.84px;top:119.00px;font-size:11.7px;color:#262626;letter-spacing:0.095px;">Format übertragen</span>
<span class="t" style="left:1605.28px;top:73.00px;font-size:11.7px;color:#262626;letter-spacing:-0.054px;">Suchen</span>
<span class="t" style="left:1604.74px;top:96.00px;font-size:11.7px;color:#262626;letter-spacing:-0.315px;">Ersetzen</span>
<span class="t" style="left:1604.74px;top:119.00px;font-size:11.7px;color:#262626;letter-spacing:0.244px;">Markieren</span>
<div class="c" style="left:193px;top:76px;width:70px;height:21px"><span class="t" style="left:1.88px;top:5.00px;font-size:12.0px;color:#262626;letter-spacing:-0.2px;">Segoe UI (Text</span></div>
<span class="t" style="left:279.90px;top:81.00px;font-size:12.0px;color:#262626;letter-spacing:-0.6px;">11</span>
<span class="t" style="left:8.21px;top:1023.00px;font-size:11px;color:#444;letter-spacing:0.127px;">Seite 5 von 8</span>
<span class="t" style="left:90.06px;top:1023.00px;font-size:11px;color:#444;letter-spacing:0.327px;">1140 Wörter</span>
<span class="t" style="left:1882.38px;top:1023.00px;font-size:10.8px;color:#444;letter-spacing:0.039px;">100</span>
<span class="t" style="left:1902.91px;top:1023.00px;font-size:11px;color:#444;">%</span>
<div class="c" style="left:698px;top:78.5px;width:58.4px;height:27px"><span class="t" style="left:0.45px;top:7.50px;font-size:14.3px;color:#000;letter-spacing:0.1px;">AaBbCcDd</span></div>
<div class="c" style="left:770px;top:79px;width:58px;height:26px"><span class="t" style="left:1.25px;top:-37.80px;font-size:70px;color:#fff;-webkit-text-stroke:2.6px #2b579a;letter-spacing:-3px;transform:scaleX(0.8);transform-origin:0 0;">Aa</span></div>
<div class="c" style="left:842px;top:79px;width:58px;height:26px"><span class="t" style="left:1.65px;top:3.00px;font-size:19.8px;color:#fff;-webkit-text-stroke:0.7px #2b579a;letter-spacing:2.4px;">AaBbC</span></div>
<div class="c" style="left:914px;top:78.5px;width:58.4px;height:27px"><span class="t" style="left:-0.17px;top:7.50px;font-size:14.3px;color:#c00000;font-weight:bold;letter-spacing:-0.35px;">AaBbCcDd</span></div>
<div class="c" style="left:986px;top:78.5px;width:58.4px;height:27px"><span class="t" style="left:-0.07px;top:7.50px;font-size:14.3px;color:#2b579a;font-weight:bold;letter-spacing:-0.35px;">AaBbCcDd</span></div>
<div class="c" style="left:1058px;top:78.5px;width:58.4px;height:27px"><span class="t" style="left:0.65px;top:-8.50px;font-size:33.6px;color:#383838;-webkit-text-stroke:1px #fff;letter-spacing:-2.6px;">AaBb</span></div>
<div class="c" style="left:1130px;top:78.5px;width:58.4px;height:27px"><span class="t" style="left:0.65px;top:-8.50px;font-size:33.6px;color:#383838;-webkit-text-stroke:1px #fff;letter-spacing:-2.6px;">AaBb</span></div>
<div class="c" style="left:1202px;top:78.5px;width:58.4px;height:27px"><span class="t" style="left:-0.35px;top:6.50px;font-size:16px;color:#2e74b5;-webkit-text-stroke:0.4px #fff;letter-spacing:-0.5px;">AaBbCcDd</span></div>
<div class="c" style="left:1274px;top:78.5px;width:58.4px;height:27px"><span class="t" style="left:0.53px;top:4.50px;font-size:18px;color:#2b579a;font-weight:bold;">1.</span></div>
<div class="c" style="left:1274px;top:78.5px;width:58.4px;height:27px"><span class="t" style="left:25.25px;top:7.50px;font-size:14.3px;color:#404040;letter-spacing:0.1px;">AaBbCc</span></div>
<div class="c" style="left:1346px;top:78.5px;width:58.4px;height:27px"><span class="t" style="left:-1.70px;top:6.10px;font-size:17.7px;color:#000;">•</span></div>
<div class="c" style="left:1346px;top:78.5px;width:58.4px;height:27px"><span class="t" style="left:13.25px;top:7.50px;font-size:14.3px;color:#000;letter-spacing:0.1px;">AaBbCcD</span></div>
<div class="c" style="left:1418px;top:78.5px;width:58.4px;height:27px"><span class="t" style="left:1.54px;top:7.50px;font-size:14.3px;color:#2e74b5;font-style:italic;letter-spacing:0.1px;">AaBbCcDd</span></div>
<div class="c" style="left:1490px;top:78.5px;width:58.4px;height:27px"><span class="t" style="left:0.25px;top:7.50px;font-size:14.3px;color:#000;letter-spacing:0.1px;">AaBbCcDd</span></div>
<span class="t" style="left:698.95px;top:111.00px;font-size:11.7px;color:#444;letter-spacing:0.020px;"><span style="font-size:9.6px;font-weight:bold;position:relative;top:-1.7px">¶</span> Standard</span>
<span class="t" style="left:788.37px;top:111.00px;font-size:11.7px;color:#444;letter-spacing:0.062px;">Titel</span>
<span class="t" style="left:845.82px;top:111.00px;font-size:11.7px;color:#444;letter-spacing:0.297px;">Untertitel</span>
<span class="t" style="left:913.34px;top:111.00px;font-size:11.7px;color:#444;letter-spacing:0.121px;">Hervorhe...</span>
<span class="t" style="left:1004.34px;top:111.00px;font-size:11.7px;color:#444;letter-spacing:0.228px;">Fett</span>
<span class="t" style="left:1054.52px;top:111.00px;font-size:11.7px;color:#444;letter-spacing:0.128px;">Überschrif...</span>
<span class="t" style="left:1127.95px;top:111.00px;font-size:11.7px;color:#444;letter-spacing:-0.023px;"><span style="font-size:9.6px;font-weight:bold;position:relative;top:-1.7px">¶</span> Übersch...</span>
<span class="t" style="left:1198.52px;top:111.00px;font-size:11.7px;color:#444;letter-spacing:0.070px;">Überschrif...</span>
<span class="t" style="left:1270.95px;top:111.00px;font-size:11.7px;color:#444;letter-spacing:0.090px;"><span style="font-size:9.6px;font-weight:bold;position:relative;top:-1.7px">¶</span> Listennu...</span>
<span class="t" style="left:1345.95px;top:111.00px;font-size:11.7px;color:#444;letter-spacing:0.176px;"><span style="font-size:9.6px;font-weight:bold;position:relative;top:-1.7px">¶</span> Aufzähl...</span>
<span class="t" style="left:1418.04px;top:111.00px;font-size:11.7px;color:#444;letter-spacing:0.090px;">Intensive...</span>
<span class="t" style="left:1503.95px;top:111.00px;font-size:11.7px;color:#444;letter-spacing:0.323px;"><span style="font-size:9.6px;font-weight:bold;position:relative;top:-1.7px">¶</span> Bild</span>
<div class="doc">
<span class="t" style="left:245.52px;top:245.00px;font-size:36.3px;color:#383838;letter-spacing:-1.971px;-webkit-text-stroke:1px #fff;">Zaubern Sie ein bisschen: mit</span>
<span class="t" style="left:244.81px;top:295.00px;font-size:36.3px;color:#383838;letter-spacing:-1.524px;-webkit-text-stroke:1px #fff;">Formatvorlagen für Überschriften</span>
<span class="t" style="left:245.89px;top:357.00px;font-size:14.9px;color:#000;letter-spacing:-0.154px;">Die Überschrift für diesen Teil ("Zaubern Sie ein bisschen: mit Formatvorlagen für</span>
<span class="t" style="left:246.12px;top:378.00px;font-size:14.9px;color:#000;letter-spacing:-0.164px;">Überschriften") sieht genau so aus wie die anderen Überschriften in diesem Dokument, aber</span>
<span class="t" style="left:246.82px;top:399.00px;font-size:14.9px;color:#000;letter-spacing:-0.163px;">sie ist weniger nützlich. Sie wurde mit <i>Schriftarteinstellungen</i> (Schriftart, Schriftgrad und</span>
<span class="t" style="left:245.89px;top:420.00px;font-size:14.9px;color:#000;letter-spacing:-0.145px;">Farbe) formatiert, während die anderen Überschriften mit einer <i>Überschrift-Formatvorlage</i></span>
<span class="t" style="left:247.05px;top:441.00px;font-size:14.9px;color:#000;letter-spacing:-0.063px;">(genauer gesagt mit Überschrift 1) formatiert wurden.</span>
<span class="t" style="left:447.78px;top:473.00px;font-size:14.9px;color:#000;letter-spacing:-0.303px;">Sehen Sie das kleine Dreieck, wenn Sie mit dem Mauszeiger</span>
<span class="t" style="left:447.78px;top:494.00px;font-size:14.9px;color:#000;letter-spacing:-0.213px;">auf eine dieser anderen Überschriften zeigen?</span>
<span class="t" style="left:447.09px;top:526.00px;font-size:14.9px;color:#000;letter-spacing:-0.120px;">Damit können Sie alles unter einer Überschrift reduzieren und</span>
<span class="t" style="left:447.78px;top:547.00px;font-size:14.9px;color:#000;letter-spacing:-0.156px;">erweitern, wie eine Gliederung. Aber diese Überschrift</span>
<span class="t" style="left:448.25px;top:568.00px;font-size:14.9px;color:#000;letter-spacing:-0.231px;">funktioniert nicht. Lassen Sie uns das beheben.</span>
<span class="t" style="left:245.92px;top:604.00px;font-size:14.9px;color:#c00000;font-weight:bold;letter-spacing:-0.402px;">Probieren Sie es aus:</span>
<span class="t" style="left:392.25px;top:604.00px;font-size:14.9px;color:#000;letter-spacing:-0.224px;">Wenden Sie die Formatvorlage</span>
<span class="t" style="left:594.95px;top:604.00px;font-size:14.9px;color:#2b579a;font-weight:bold;letter-spacing:-0.203px;">Überschrift 1</span>
<span class="t" style="left:688.68px;top:604.00px;font-size:14.9px;color:#000;letter-spacing:-0.121px;">an:</span>
<span class="t" style="left:275.09px;top:637.00px;font-size:18.6px;color:#2b579a;font-weight:bold;letter-spacing:1.196px;">1.</span>
<span class="t" style="left:298.59px;top:640.00px;font-size:14.9px;color:#404040;letter-spacing:-0.161px;">Platzieren Sie den Cursor an einer beliebigen Stelle in der Überschrift oben</span>
<span class="t" style="left:299.05px;top:661.00px;font-size:14.9px;color:#404040;letter-spacing:-0.199px;">("Zaubern Sie ein bisschen: mit Formatvorlagen für Überschriften") – aber wählen Sie</span>
<span class="t" style="left:298.82px;top:682.00px;font-size:14.9px;color:#404040;letter-spacing:-0.176px;">nichts aus.</span>
<span class="t" style="left:274.67px;top:715.00px;font-size:18.6px;color:#2b579a;font-weight:bold;letter-spacing:1.615px;">2.</span>
<span class="t" style="left:299.28px;top:718.00px;font-size:14.9px;color:#404040;letter-spacing:-0.314px;">Suchen Sie auf der Registerkarte</span>
<span class="t" style="left:512.32px;top:718.00px;font-size:14.9px;color:#2b579a;font-weight:bold;letter-spacing:-0.170px;">Start</span>
<span class="t" style="left:549.78px;top:718.00px;font-size:14.9px;color:#404040;letter-spacing:-0.108px;">die Gruppe</span>
<span class="t" style="left:625.12px;top:718.00px;font-size:14.9px;color:#2b579a;font-weight:bold;letter-spacing:-0.118px;">Formatvorlagen</span>
<span class="t" style="left:734.89px;top:718.00px;font-size:14.9px;color:#404040;letter-spacing:-0.173px;">, und wählen Sie</span>
<span class="t" style="left:299.28px;top:739.00px;font-size:14.9px;color:#404040;letter-spacing:0.164px;">dort</span>
<span class="t" style="left:330.25px;top:739.00px;font-size:14.9px;color:#2b579a;font-weight:bold;letter-spacing:-0.237px;">Überschrift 1</span>
<span class="t" style="left:424.75px;top:739.00px;font-size:14.9px;color:#404040;letter-spacing:-0.054px;">(Tastenkombination Alt+1) aus.</span>
<span class="t" style="left:246.02px;top:771.00px;font-size:14.9px;color:#000;letter-spacing:-0.216px;">Tadaa! Jetzt sieht es wie eine Überschrift aus und verhält sich auch so.</span>
<span class="t" style="left:1054.38px;top:245.00px;font-size:36.3px;color:#383838;letter-spacing:-1.585px;-webkit-text-stroke:1px #fff;">Überarbeiten Sie Ihr Dokument im</span>
<span class="t" style="left:1054.81px;top:295.00px;font-size:36.3px;color:#383838;letter-spacing:-1.627px;-webkit-text-stroke:1px #fff;">Handumdrehen</span>
<span class="t" style="left:1055.89px;top:566.00px;font-size:14.9px;color:#000;letter-spacing:-0.210px;">Mit Sätzen von Formatvorlagen und Designs können Sie das Aussehen Ihres Dokuments</span>
<span class="t" style="left:1056.58px;top:587.00px;font-size:14.9px;color:#000;letter-spacing:-0.064px;">augenblicklich von Grund auf ändern. Sie funktionieren optimal, wenn Ihr Dokument mit</span>
<span class="t" style="left:1055.89px;top:608.00px;font-size:14.9px;color:#000;letter-spacing:-0.100px;">Formatvorlagen formatiert ist (deshalb war es auch eine gute Idee, die Überschrift oben mit</span>
<span class="t" style="left:1056.58px;top:629.00px;font-size:14.9px;color:#000;letter-spacing:-0.097px;">einer Formatvorlage zu formatieren).</span>
<span class="t" style="left:1055.72px;top:661.00px;font-size:14.9px;color:#c00000;font-weight:bold;letter-spacing:-0.392px;">Probieren Sie es aus:</span>
<span class="t" style="left:1201.79px;top:661.00px;font-size:14.9px;color:#000;letter-spacing:-0.245px;">Erkunden Sie die Sätze von Formatvorlagen und Designs:</span>
<span class="t" style="left:1085.09px;top:694.00px;font-size:18.6px;color:#2b579a;font-weight:bold;letter-spacing:1.496px;">1.</span>
<span class="t" style="left:1109.05px;top:697.00px;font-size:14.9px;color:#404040;letter-spacing:-0.245px;">Wählen Sie auf der Registerkarte</span>
<span class="t" style="left:1323.52px;top:697.00px;font-size:14.9px;color:#2b579a;font-weight:bold;letter-spacing:-0.067px;">Entwurf</span>
<span class="t" style="left:1382.18px;top:697.00px;font-size:14.9px;color:#404040;letter-spacing:-0.125px;">den Befehl</span>
<span class="t" style="left:1454.22px;top:697.00px;font-size:14.9px;color:#2b579a;font-weight:bold;letter-spacing:-0.342px;">Designs</span>
<span class="t" style="left:1512.58px;top:697.00px;font-size:14.9px;color:#404040;letter-spacing:-0.267px;">aus, und wählen Sie</span>
<span class="t" style="left:1108.78px;top:718.00px;font-size:14.9px;color:#404040;letter-spacing:-0.049px;">dann im Dropdownfeld ein Design aus.</span>
<span class="t" style="left:1108.09px;top:739.00px;font-size:14.9px;color:#404040;letter-spacing:-0.225px;">Beachten Sie, dass der Katalog der Formatvorlagensätze aktualisiert wird, um das</span>
<span class="t" style="left:1109.25px;top:760.00px;font-size:14.9px;color:#404040;letter-spacing:-0.163px;">von Ihnen ausgewählte Design zu berücksichtigen.</span>
<span class="t" style="left:1084.67px;top:793.00px;font-size:18.6px;color:#2b579a;font-weight:bold;letter-spacing:1.915px;">2.</span>
<span class="t" style="left:1109.25px;top:796.00px;font-size:14.9px;color:#404040;letter-spacing:-0.182px;">Wählen Sie in der Dropdownliste ein Design aus, das Ihnen gefällt, und klicken Sie,</span>
<span class="t" style="left:1108.32px;top:817.00px;font-size:14.9px;color:#404040;letter-spacing:-0.094px;">um es zu übernehmen.</span>
<div class="c" style="left:248px;top:476px;width:183px;height:96px"><span class="t" style="left:21.65px;top:11.00px;font-size:31px;color:#3c3c3c;letter-spacing:-1.665px;-webkit-text-stroke:1px #fff;">Verleihen Sie</span></div>
<span class="t" style="left:268.03px;top:529.00px;font-size:31px;color:#3c3c3c;letter-spacing:-1.160px;-webkit-text-stroke:1px #fff;">Formatieren</span>
<span class="t" style="left:1071.08px;top:374.00px;font-size:11.1px;color:#fff;letter-spacing:0.236px;">Datei</span>
<span class="t" style="left:1123.90px;top:374.00px;font-size:11.1px;color:#fff;letter-spacing:-0.120px;">Start</span>
<span class="t" style="left:1172.18px;top:374.00px;font-size:11.1px;color:#fff;letter-spacing:0.092px;">Einfügen</span>
<span class="t" style="left:1241.98px;top:374.00px;font-size:11.1px;color:#2b579a;letter-spacing:0.045px;">Entwurf</span>
<span class="t" style="left:1305.38px;top:374.00px;font-size:11.1px;color:#fff;letter-spacing:0.133px;">Layout</span>
<div class="c" style="left:1360px;top:370px;width:11px;height:20px"><span class="t" style="left:4.68px;top:4.00px;font-size:11.1px;color:#fff;">Referenzen</span></div>
<span class="t" style="left:1062.18px;top:432.00px;font-size:11.1px;color:#444;letter-spacing:-0.305px;">Designs</span>
<span class="t" style="left:1108.14px;top:406.00px;font-size:7.2px;color:#111;letter-spacing:0.381px;">Titel</span>
<span class="t" style="left:1107.97px;top:419.50px;font-size:4.4px;color:#2e5f9e;letter-spacing:0.151px;">Überschrift 1</span>
<span class="t" style="left:1173.94px;top:406.00px;font-size:7.2px;color:#44679f;letter-spacing:0.331px;">Titel</span>
<span class="t" style="left:1173.99px;top:419.80px;font-size:4.2px;color:#1f3864;letter-spacing:0.078px;">Überschrift 1</span>
<span class="t" style="left:1240.09px;top:407.00px;font-size:10.4px;color:#4a73b5;letter-spacing:0.712px;">Titel</span>
<span class="t" style="left:1240.36px;top:427.00px;font-size:4.6px;color:#6a93c9;letter-spacing:0.273px;">Überschrift 1</span>
<span class="t" style="left:1349.25px;top:408.00px;font-size:5.2px;color:#222;font-weight:bold;letter-spacing:0.927px;">T<span style="font-size:3.9px">ITEL</span></span>
<span class="t" style="left:1305.04px;top:420.00px;font-size:4.4px;color:#222;font-weight:bold;letter-spacing:-0.011px;">Ü<span style="font-size:3.4px">BERSCHRIFT</span> 1</span>
<span class="t" style="left:1070.90px;top:465.00px;font-size:11.1px;color:#555;font-weight:bold;letter-spacing:0.244px;">Office</span>
<span class="t" style="left:1083.13px;top:530.00px;font-size:11.1px;color:#333;letter-spacing:0.488px;">Office</span>
<span class="t" style="left:1152.38px;top:530.00px;font-size:11.1px;color:#444;letter-spacing:-0.139px;">Facette</span>
<span class="t" style="left:1226.38px;top:530.00px;font-size:11.1px;color:#444;letter-spacing:-0.356px;">Fetzen</span>
<span class="t" style="left:1298.23px;top:530.00px;font-size:11.1px;color:#444;letter-spacing:-0.374px;">Galerie</span>
</div>
<svg style="position:absolute;left:261px;top:509px;" width="13" height="19" viewBox="0 0 13 19"><path d="M1 1V14.6L4.2 11.8L6.6 17.4L8.8 16.4L6.4 11H10.8Z" fill="#fff" stroke="#222" stroke-width="1"/></svg>
</body></html>
